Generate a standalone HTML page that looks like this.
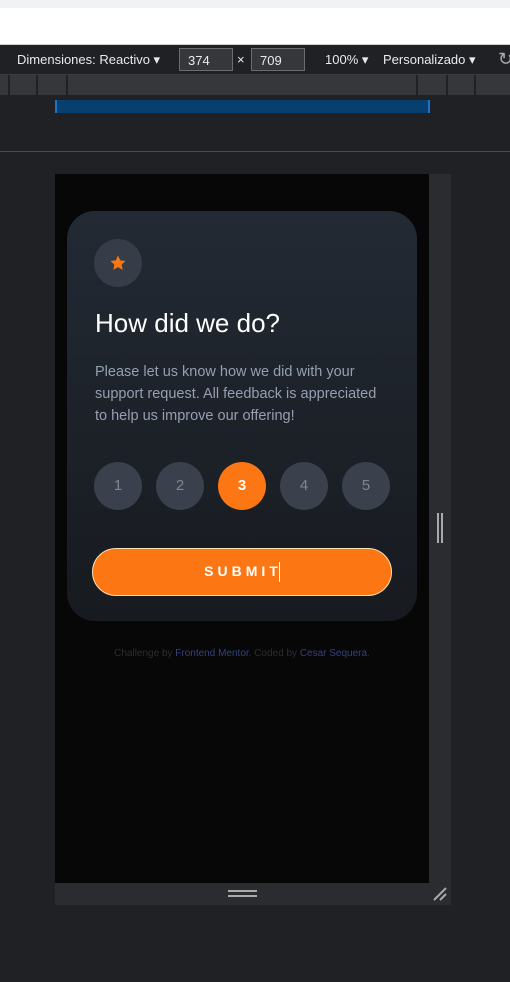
<!DOCTYPE html>
<html><head><meta charset="utf-8"><style>
*{margin:0;padding:0;box-sizing:border-box}
body{width:510px;height:982px;background:#202124;position:relative;overflow:hidden;font-family:"Liberation Sans",sans-serif}
.a{position:absolute}
</style></head><body>
<div class="a" style="left:0;top:0;width:510px;height:8px;background:#f1f2f4"></div>
<div class="a" style="left:0;top:8px;width:510px;height:36px;background:#fff"></div>
<div class="a" style="left:0;top:44px;width:510px;height:1px;background:#cfd0d2"></div>
<div class="a" style="left:0;top:45px;width:510px;height:29px;background:#202124;color:#e8eaed;font-size:13px">
 <span class="a" style="left:17px;top:7px">Dimensiones: Reactivo ▾</span>
 <div class="a" style="left:179px;top:3px;width:54px;height:23px;border:1px solid #6b6c70;background:#36373b;padding:4px 0 0 8px">374</div>
 <span class="a" style="left:237px;top:7px">×</span>
 <div class="a" style="left:251px;top:3px;width:54px;height:23px;border:1px solid #6b6c70;background:#36373b;padding:4px 0 0 8px">709</div>
 <span class="a" style="left:325px;top:7px">100% ▾</span>
 <span class="a" style="left:383px;top:7px">Personalizado ▾</span>
 <span class="a" style="left:498px;top:4px;font-size:18px;color:#aaa">↻</span>
</div>
<div class="a" style="left:0;top:74px;width:510px;height:1px;background:#3c3d41"></div>
<div class="a" style="left:0;top:75px;width:510px;height:20px;background:#36373b"></div>
<div class="a" style="left:8px;top:75px;width:2px;height:20px;background:#202124"></div>
<div class="a" style="left:36px;top:75px;width:2px;height:20px;background:#202124"></div>
<div class="a" style="left:66px;top:75px;width:2px;height:20px;background:#202124"></div>
<div class="a" style="left:416px;top:75px;width:2px;height:20px;background:#202124"></div>
<div class="a" style="left:446px;top:75px;width:2px;height:20px;background:#202124"></div>
<div class="a" style="left:474px;top:75px;width:2px;height:20px;background:#202124"></div>
<div class="a" style="left:55px;top:100px;width:375px;height:13px;background:#073f6e;border-left:2px solid #1a73c8;border-right:2px solid #1a73c8"></div>
<div class="a" style="left:0;top:151px;width:510px;height:1px;background:#4a4b4f"></div>
<div class="a" style="left:55px;top:174px;width:374px;height:709px;background:#070707"></div>
<div class="a" style="left:429px;top:174px;width:22px;height:731px;background:#2b2c30"></div>
<div class="a" style="left:55px;top:883px;width:396px;height:22px;background:#2b2c30"></div>
<div class="a" style="left:437px;top:513px;width:2px;height:30px;background:#aaa"></div>
<div class="a" style="left:441px;top:513px;width:2px;height:30px;background:#aaa"></div>
<div class="a" style="left:228px;top:890px;width:29px;height:2px;background:#aaa"></div>
<div class="a" style="left:228px;top:895px;width:29px;height:2px;background:#aaa"></div>
<svg class="a" style="left:432px;top:886px" width="16" height="16"><path d="M2 14L14 2M8 14L14 8" stroke="#aaa" stroke-width="2"/></svg>

<div class="a" style="left:67px;top:211px;width:350px;height:410px;border-radius:28px;background:linear-gradient(#232a34,#171a1f)">
 <div class="a" style="left:27px;top:28px;width:48px;height:48px;border-radius:50%;background:#363d49"></div>
 <svg class="a" style="left:42px;top:43px" width="18" height="18" viewBox="0 0 24 24"><path d="M12 2l3 6.5 7 .8-5.2 4.8 1.5 7L12 17.5 5.7 21.1l1.5-7L2 9.3l7-.8z" fill="#fc7614"/></svg>
 <div class="a" style="left:28px;top:97px;color:#fff;font-size:26px">How did we do?</div>
 <div class="a" style="left:28px;top:150px;width:292px;color:#969fb1;font-size:14.5px;line-height:22px">Please let us know how we did with your support request. All feedback is appreciated to help us improve our offering!</div>
 <div class="a" style="left:27px;top:251px;width:48px;height:48px;border-radius:50%;background:#3a414d;color:#7c8798;font-size:15px;text-align:center;line-height:48px">1</div>
 <div class="a" style="left:89px;top:251px;width:48px;height:48px;border-radius:50%;background:#3a414d;color:#7c8798;font-size:15px;text-align:center;line-height:48px">2</div>
 <div class="a" style="left:151px;top:251px;width:48px;height:48px;border-radius:50%;background:#fc7614;color:#fff;font-size:15px;font-weight:bold;text-align:center;line-height:48px">3</div>
 <div class="a" style="left:213px;top:251px;width:48px;height:48px;border-radius:50%;background:#3a414d;color:#7c8798;font-size:15px;text-align:center;line-height:48px">4</div>
 <div class="a" style="left:275px;top:251px;width:48px;height:48px;border-radius:50%;background:#3a414d;color:#7c8798;font-size:15px;text-align:center;line-height:48px">5</div>
 <div class="a" style="left:25px;top:337px;width:300px;height:48px;border-radius:24px;background:#fc7614;border:1px solid #f6e3b0;color:#fff;font-size:14px;font-weight:bold;letter-spacing:4px;text-align:center;line-height:44px">SUBMIT<span style="display:inline-block;width:1px;height:20px;background:#fff;vertical-align:middle;margin-left:-3px"></span></div>
</div>
<div class="a" style="left:55px;top:648px;width:374px;text-align:center;font-size:10px;color:#2a2d33">Challenge by <span style="color:#34427c">Frontend Mentor</span>. Coded by <span style="color:#34427c">Cesar Sequera</span>.</div>
</body></html>
